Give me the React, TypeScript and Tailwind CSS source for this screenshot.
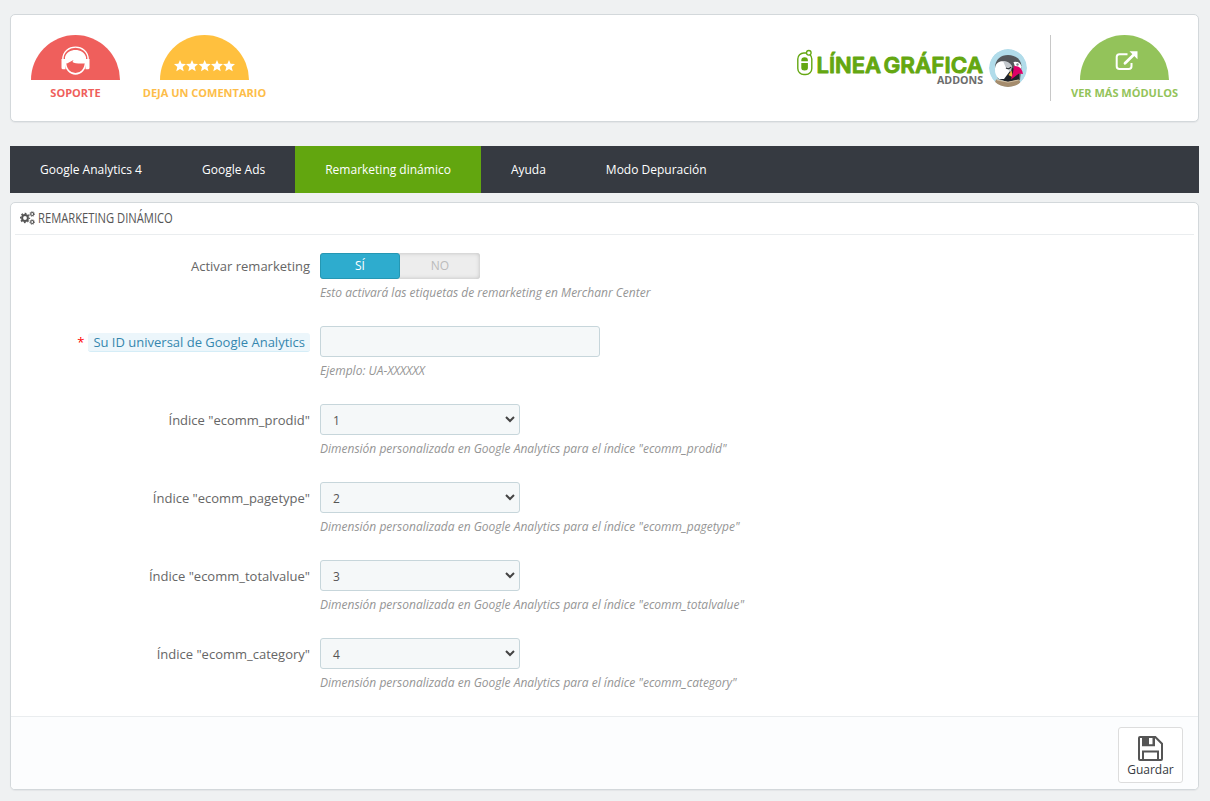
import type { ReactNode } from 'react';

const tabs = ['Google Analytics 4', 'Google Ads', 'Remarketing dinámico', 'Ayuda', 'Modo Depuración'];

const dimensions = [
  { name: 'ecomm_prodid', value: '1' },
  { name: 'ecomm_pagetype', value: '2' },
  { name: 'ecomm_totalvalue', value: '3' },
  { name: 'ecomm_category', value: '4' },
];

function SupportIcon() {
  return (
    <svg width="90" height="45" viewBox="0.5 0 90 45" className="block">
      <path d="M0.5 45a44.5 45 0 0 1 89 0z" fill="#ef5f5c" />
      <path d="M32.3 24.5C32.5 8 57.500 8 57.700 24.500" fill="none" stroke="#fff" strokeWidth="1.400" />
      <path d="M34.500 22C37 12.500 53 12.500 55.500 22V28.300C50 28.800 44 28.500 42 27L43 25 36.500 28.500 34.500 28z" fill="#fff" />
      <path d="M35 26.500C34.500 43 55.500 43 55 26.500" fill="none" stroke="#fff" strokeWidth="1.600" />
      <path d="M31 24h4v10.300H32.500q-1.500 0-1.500-1.500zM55 24H59v8.800q0 1.500-1.500 1.500h-2.500z" fill="#fff" />
    </svg>
  );
}

function StarsIcon() {
  return (
    <svg width="90" height="45" viewBox="0.5 0 90 45" className="block">
      <path d="M0.500 45a44.500 45 0 0 1 89 0z" fill="#ffc03e" />
      {[20.500, 32.500, 45.200, 57.500, 69.500].map((x) => (
        <path
          key={x}
          transform={`translate(${x} 31)`}
          d="M0-6 1.600-2.200 6-1.900 2.700 1 3.700 5.300 0 3-3.700 5.300-2.700 1-6-1.900-1.600-2.200z"
          fill="#fff"
        />
      ))}
    </svg>
  );
}

function ModulesIcon() {
  return (
    <svg width="90" height="45" viewBox="0.5 0 90 45" className="block">
      <path d="M0.500 45a44.500 45 0 0 1 89 0z" fill="#93c35a" />
      <path d="M48 19.300H40q-2.800 0-2.800 2.800v9.200q0 2.800 2.800 2.800h9.200q2.800 0 2.800-2.800V28" fill="none" stroke="#fff" strokeWidth="2" />
      <path d="M45.500 28.300 55 19" fill="none" stroke="#fff" strokeWidth="2.800" strokeLinecap="round" />
      <path d="M50 16.300h8v8z" fill="#fff" />
    </svg>
  );
}

function Logo() {
  return (
    <svg width="236" height="50" viewBox="792 44 236 50" className="block">
      <rect x="797.800" y="53" width="14" height="21.500" rx="6" fill="#fff" stroke="#64a711" strokeWidth="1.400" />
      <path d="M801.300 60.500q0-3.200 3.300-3.200t3.300 3.200v.7h-6.600zM801.300 63h6.600v5q0 2.500-3.300 2.500t-3.300-2.500z" fill="#64a711" />
      <circle cx="808.800" cy="52.800" r="2.300" fill="#fff" stroke="#64a711" strokeWidth="1.300" />
      <g
        fontFamily="Inter, 'Liberation Sans', sans-serif" fontWeight="600" fontSize="21.500"
        fill="#64a711" stroke="#64a711" strokeWidth=".9" strokeLinejoin="round"
      >
        <text x="816.500" y="72.700" textLength="64.500" lengthAdjust="spacingAndGlyphs">LÍNEA</text>
        <text x="883.500" y="72.700" textLength="99.500" lengthAdjust="spacingAndGlyphs">GRÁFICA</text>
      </g>
      <text
        x="937" y="84.300" textLength="46" lengthAdjust="spacingAndGlyphs"
        fontFamily="'Open Sans', sans-serif" fontWeight="700" fontSize="10.300" fill="#6c6c6c"
      >
        ADDONS
      </text>
      <clipPath id="badge"><circle cx="1008" cy="68" r="19" /></clipPath>
      <g clipPath="url(#badge)">
        <circle cx="1008" cy="68" r="19" fill="#b1dcea" />
        <path d="M995 68C995 59 1001 55 1008 55S1021 59 1021.500 66L1020 80 1008 82 998 79z" fill="#54575a" />
        <path d="M1003 70 1013 68 1019 74 1019 80 1008 82.500 1000 79z" fill="#20242a" />
        <path d="M995 68.500C995.500 62.500 1000 60.500 1004.500 61.500L1011 66 1010 71 1004 79H999Q994.500 75 995 68.500z" fill="#fff" />
        <path d="M1003 61q6 0 9 5l-1 6-5-4z" fill="#c4c9cd" />
        <path d="M1013.500 62q6-1.500 8 4.500l-1 4-5-2z" fill="#fff" />
        <circle cx="1017.500" cy="64.500" r="1.200" fill="#7c858c" />
        <path d="M1006 68q3 1.800 5-1" fill="none" stroke="#252a2e" strokeWidth="1.100" />
        <path d="M1008.500 75 1011.500 70.500 1013 77.500z" fill="#f5b43c" />
        <path d="M1014 66q7.500-.5 9 8l-4-.500-8 6 2-7z" fill="#df0067" />
        <path d="M996 79.500 1008 82 1019 79.500 1023 88H993z" fill="#a58c6d" />
        <path d="M997 80 1008 82.200 1018.500 80" fill="none" stroke="#d2bfa2" strokeWidth="1" />
      </g>
    </svg>
  );
}

function CogsIcon() {
  return (
    <svg width="15" height="14" viewBox="0 0 15 14" className="block shrink-0" fill="none" stroke="#555">
      <circle cx="5" cy="7" r="2.900" strokeWidth="2" />
      <circle cx="5" cy="7" r="4.500" strokeWidth="1.300" strokeDasharray="1.850 1.684" strokeDashoffset=".9" />
      <circle cx="12.200" cy="3" r="1.500" strokeWidth="1.200" />
      <circle cx="12.200" cy="3" r="2.400" strokeWidth=".8" strokeDasharray="1 .885" />
      <circle cx="12.200" cy="11" r="1.500" strokeWidth="1.200" />
      <circle cx="12.200" cy="11" r="2.400" strokeWidth=".8" strokeDasharray="1 .885" />
    </svg>
  );
}

function SaveIcon() {
  return (
    <svg width="25" height="25" viewBox="0 0 25 25" className="block">
      <path d="M2 1h15.300L24 7.700V23q0 1-1 1H2q-1 0-1-1V2q0-1 1-1z" fill="none" stroke="#555" strokeWidth="2" />
      <path d="M5 1v8.300h11V1M5 24v-8.500h15V24" fill="none" stroke="#555" strokeWidth="2" />
      <path d="M5 1h6v8H5zM14.500 1h2v8h-2z" fill="#555" />
    </svg>
  );
}

function Field({ label, help, children }: { label: ReactNode; help: string; children: ReactNode }) {
  return (
    <div className="mb-6 flex">
      <div className="w-[299px] shrink-0 pt-[4px] text-right text-[13px] leading-[19px] text-[#666]">{label}</div>
      <div className="ml-[10px]">
        {children}
        <p className="mt-[5px] text-[12px] italic leading-[18px] text-[#959595]">{help}</p>
      </div>
    </div>
  );
}

export default function App() {
  return (
    <div className="h-[801px] overflow-hidden bg-[#eff1f2] pl-[10px] pr-[11px] pt-[14px] font-['Open_Sans',sans-serif] text-[#555]">
      <header className="flex h-[108px] items-start rounded-[5px] border border-[#d3d8db] bg-white pt-[20px] shadow-[0_1px_1px_#e3e5e7]">
        <a className="ml-[19.5px] flex w-[90px] flex-col items-center text-[#ef5f5c]">
          <SupportIcon />
          <span className="mt-[4px] text-[11px] font-bold leading-[18px]">SOPORTE</span>
        </a>
        <a className="ml-[19px] flex w-[130px] flex-col items-center text-[#fdbd49]">
          <StarsIcon />
          <span className="mt-[4px] whitespace-nowrap text-[11px] font-bold leading-[18px]">DEJA UN COMENTARIO</span>
        </a>
        <div className="ml-auto mt-[9px]"><Logo /></div>
        <div className="ml-[22px] h-[66px] w-px bg-[#c8c8c8]" />
        <a className="ml-[10px] mr-[10px] flex w-[127px] flex-col items-center text-[#93c35a]">
          <ModulesIcon />
          <span className="mt-[4px] whitespace-nowrap text-[11px] font-bold leading-[18px]">VER MÁS MÓDULOS</span>
        </a>
      </header>

      <nav className="mt-6 flex h-[47px] bg-[#363a41]">
        {tabs.map((tab) => (
          <a
            key={tab}
            className={`flex items-center px-[30px] text-[12px] font-medium text-white ${tab === 'Remarketing dinámico' ? 'bg-[#62a60f]' : ''}`}
          >
            {tab}
          </a>
        ))}
      </nav>

      <main className="mt-[9px] flex h-[588px] flex-col overflow-hidden rounded-[5px] border border-[#d3d8db] bg-white shadow-[0_1px_1px_#e3e5e7]">
        <h3 className="mx-[4px] flex h-[32px] items-center gap-[3px] border-b border-[#eaedef] pb-[2px] pl-[5px] text-[14px]">
          <CogsIcon />
          <span className="inline-block origin-left scale-x-[.8] whitespace-nowrap text-[14px]">REMARKETING DINÁMICO</span>
        </h3>

        <form className="flex-1 pt-[18px]">
          <Field label="Activar remarketing" help="Esto activará las etiquetas de remarketing en Merchanr Center">
            <div className="flex h-[26px] w-[160px] rounded-[3px] bg-[#ededed] text-center text-[12px] leading-[24px] shadow-[inset_0_0_4px_#bbb]">
              <span className="w-[80px] rounded-[3px] border border-[#2597b3] bg-[#2eacce] text-white">SÍ</span>
              <span className="w-[80px] pt-px text-[#bbb]">NO</span>
            </div>
          </Field>
          <Field
            label={
              <span className="flex items-center justify-end pt-[3px]">
                <span className="mr-[4px] text-[#f00]">*</span>
                <span className="h-[19px] rounded-[3px] border-b border-[#d5edf7] bg-[#ecf6fb] px-[5px] leading-[19px] text-[#3586ae]">Su ID universal de Google Analytics</span>
              </span>
            }
            help="Ejemplo: UA-XXXXXX"
          >
            <input className="block h-[31px] w-[280px] rounded-[3px] border border-[#c7d6db] bg-[#f5f8f9] px-2 text-[12px]" />
          </Field>
          {dimensions.map(({ name, value }) => (
            <Field
              key={name}
              label={<span className="block pt-[3px]">{`Índice "${name}"`}</span>}
              help={`Dimensión personalizada en Google Analytics para el índice "${name}"`}
            >
              <div className="flex h-[31px] w-[200px] items-center justify-between rounded-[3px] border border-[#c7d6db] bg-[#f5f8f9] pl-[12px] pr-[4px] text-[12px]">
                <span className="pt-[2px]">{value}</span>
                <svg width="10" height="7" viewBox="0 0 10 7" fill="none" stroke="#444" strokeWidth="2">
                  <path d="M1 1l4 4 4-4" />
                </svg>
              </div>
            </Field>
          ))}
        </form>

        <footer className="flex h-[73px] shrink-0 justify-end border-t border-[#eaedef] bg-[#fcfdfe] pr-[15px] pt-[10px]">
          <button type="button" className="flex h-[56px] w-[65px] flex-col items-center rounded-[3px] border border-[#ddd] bg-white pt-[8px] text-[12px] leading-[18px] text-[#363a41]">
            <SaveIcon />
            Guardar
          </button>
        </footer>
      </main>
    </div>
  );
}
